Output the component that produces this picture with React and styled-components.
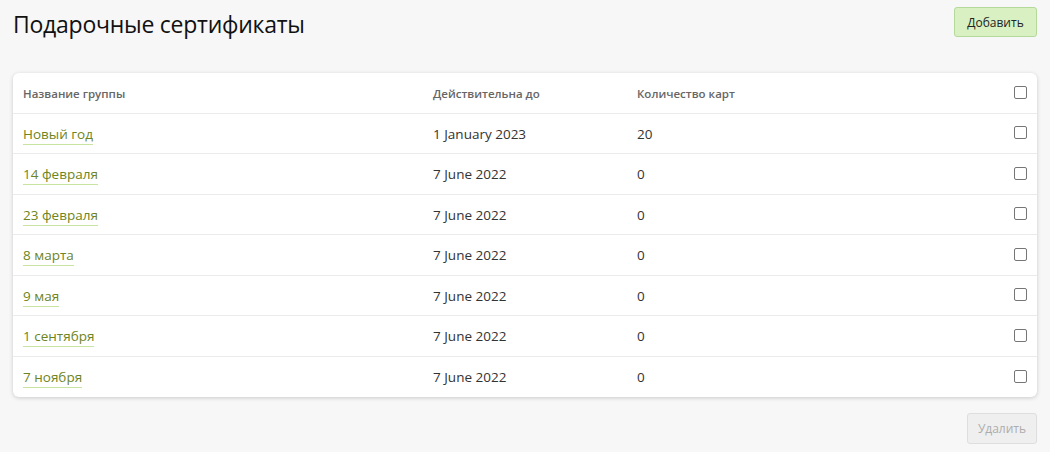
import styled, { createGlobalStyle } from "styled-components";

const GlobalStyle = createGlobalStyle`
  body {
    margin: 0;
    background: #f7f7f7;
    font-family: "Open Sans", "Noto Sans", sans-serif;
    color: #333;
  }
`;

const rows = [
  { name: 'Новый год', date: '1 January 2023', count: 20 },
  { name: '14 февраля', date: '7 June 2022', count: 0 },
  { name: '23 февраля', date: '7 June 2022', count: 0 },
  { name: '8 марта', date: '7 June 2022', count: 0 },
  { name: '9 мая', date: '7 June 2022', count: 0 },
  { name: '1 сентября', date: '7 June 2022', count: 0 },
  { name: '7 ноября', date: '7 June 2022', count: 0 },
];

const App = () => {
  return (
    <Page>
      <GlobalStyle />
      <TopBar>
        <Title>Подарочные сертификаты</Title>
        <AddBtn>Добавить</AddBtn>
      </TopBar>
      <Card>
        <HeadRow>
          <Cell>Название группы</Cell>
          <Cell>Действительна до</Cell>
          <Cell>Количество карт</Cell>
          <CheckCell><Check /></CheckCell>
        </HeadRow>
        {rows.map((r) => (
          <Row key={r.name}>
            <Cell><GroupLink>{r.name}</GroupLink></Cell>
            <Cell>{r.date}</Cell>
            <Cell>{r.count}</Cell>
            <CheckCell><Check /></CheckCell>
          </Row>
        ))}
      </Card>
      <Footer>
        <DeleteBtn>Удалить</DeleteBtn>
      </Footer>
    </Page>
  );
};

export default App;

const Page = styled.div`
  padding: 7px 13px 0 13px;
  width: 1024px;
`;

const TopBar = styled.div`
  display: flex;
  justify-content: space-between;
  align-items: flex-start;
  height: 66px;
`;

const Title = styled.h1`
  margin: 0;
  margin-top: 1px;
  font-size: 23px;
  font-weight: 400;
  color: #111;
  letter-spacing: -0.25px;
`;

const AddBtn = styled.div`
  box-sizing: border-box;
  width: 83px;
  height: 30px;
  display: flex;
  align-items: center;
  justify-content: center;
  background: #d8f0c2;
  border: 1px solid #b4d99a;
  border-radius: 3px;
  font-size: 12px;
  color: #222;
`;

const Card = styled.div`
  background: #fff;
  border-radius: 6px;
  box-shadow: 0 1px 4px rgba(0, 0, 0, 0.18);
  overflow: hidden;
`;

const gridCols = `410px 204px 1fr 13px`;

const HeadRow = styled.div`
  display: grid;
  grid-template-columns: ${gridCols};
  align-items: center;
  box-sizing: border-box;
  height: 40.5px;
  padding: 1px 10px 0 10px;
  font-size: 11.5px;
  font-weight: 600;
  color: #666;
  border-bottom: 1.5px solid #ebebeb;
`;

const Row = styled.div`
  display: grid;
  grid-template-columns: ${gridCols};
  align-items: center;
  box-sizing: border-box;
  height: 40.5px;
  padding: 1px 10px 0 10px;
  font-size: 13.5px;
  color: #333;
  border-bottom: 1.5px solid #ebebeb;
  &:last-child {
    border-bottom: none;
  }
`;

const Cell = styled.div`
  white-space: nowrap;
`;

const CheckCell = styled.div`
  display: flex;
  align-items: center;
  margin-top: -2px;
`;

const Check = styled.span`
  display: block;
  width: 11px;
  height: 11px;
  border: 1px solid #767676;
  border-radius: 2px;
  background: #fff;
`;

const GroupLink = styled.span`
  color: #6e8421;
  border-bottom: 1px solid #c9e3a1;
  padding-bottom: 1px;
`;

const Footer = styled.div`
  display: flex;
  justify-content: flex-end;
  padding-top: 16px;
`;

const DeleteBtn = styled.div`
  box-sizing: border-box;
  width: 70px;
  height: 31px;
  display: flex;
  align-items: center;
  justify-content: center;
  background: #efefef;
  border: 1px solid #dedede;
  border-radius: 3px;
  font-size: 12px;
  color: #adadad;
`;
